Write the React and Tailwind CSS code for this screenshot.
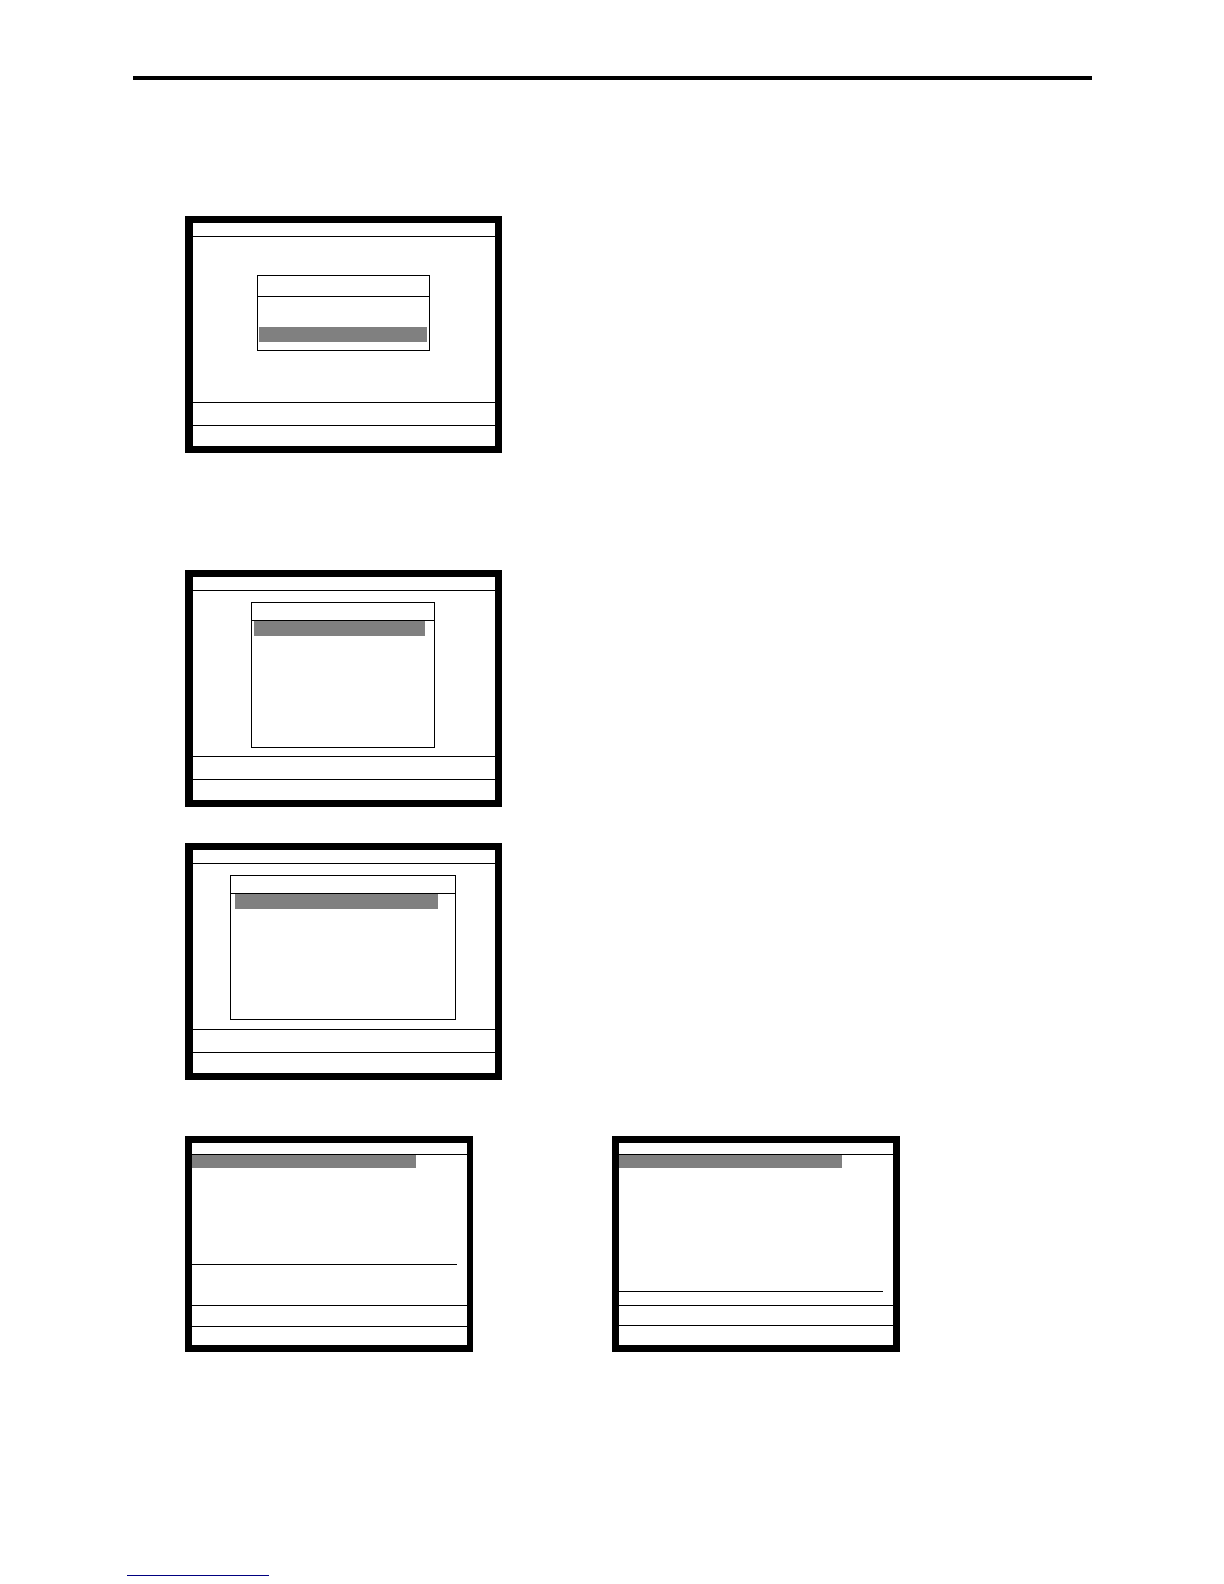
import React from 'react';
import clsx from 'clsx';

// Small terminal screen: title strip, body, message row and function key row
function Screen({ children, className, title, message, keys }) {
  return (
    <section className={clsx('flex flex-col border-black bg-white', className)}>
      <div className={clsx('shrink-0 border-b border-black', title)} />
      <div className="flex-1">{children}</div>
      <div className={clsx('shrink-0 border-t border-black', message)} />
      <div className={clsx('shrink-0 border-t border-black', keys)} />
    </section>
  );
}

// Pop-up menu with one highlighted row
function Menu({ className, title, highlight }) {
  return (
    <div className={clsx('border border-black', className)}>
      <div className={clsx('border-b border-black', title)} />
      <div className={clsx('h-[15px] bg-[#808080]', highlight)} />
    </div>
  );
}

const LARGE = 'h-[237px] w-[317px] border-[7px] border-l-8';

export default function App() {
  return (
    <div className="min-h-screen bg-white pt-[76px] pb-2">
      <header className="mr-[132px] ml-[133px] border-t-4 border-black" />

      <main className="pt-[136px] pl-[185px]">
        <Screen className={LARGE} title="h-[14px]" message="h-[23px]" keys="h-[21px]">
          <div className="flex pt-[38px] pl-16">
            <Menu className="h-[76px] w-[173px]" title="h-[21px]" highlight="mt-[30px] ml-px w-[168px]" />
          </div>
        </Screen>

        <Screen className={clsx(LARGE, 'mt-[117px]')} title="h-[14px]" message="h-[23px]" keys="h-[21px]">
          <div className="flex pt-[11px] pl-[58px]">
            <Menu className="h-[146px] w-[184px]" title="h-[18px]" highlight="ml-0.5 w-[171px]" />
          </div>
        </Screen>

        <Screen className={clsx(LARGE, 'mt-9')} title="h-[14px]" message="h-[23px]" keys="h-[21px]">
          <div className="flex pt-[11px] pl-[37px]">
            <Menu className="h-[145px] w-[226px]" title="h-[18px]" highlight="ml-1 w-[203px]" />
          </div>
        </Screen>

        <div className="mt-14 flex gap-[139px]">
          <Screen className="h-[216px] w-[288px] border-[7px] border-r-[6px]" title="h-3" message="h-[21px]" keys="h-[19px]">
            <div className="h-[13px] w-[224px] bg-[#808080]" />
            <div className="mt-24 mr-[10px] border-t border-black" />
          </Screen>

          <Screen className="h-[216px] w-[288px] border-[7px]" title="h-3" message="h-5" keys="h-5">
            <div className="h-[13px] w-[223px] bg-[#808080]" />
            <div className="mt-[123px] mr-[10px] border-t border-black" />
          </Screen>
        </div>
      </main>

      <footer className="pt-[223px] pl-[127px]">
        <div className="h-px w-[142px] bg-[#000080]" />
      </footer>
    </div>
  );
}
